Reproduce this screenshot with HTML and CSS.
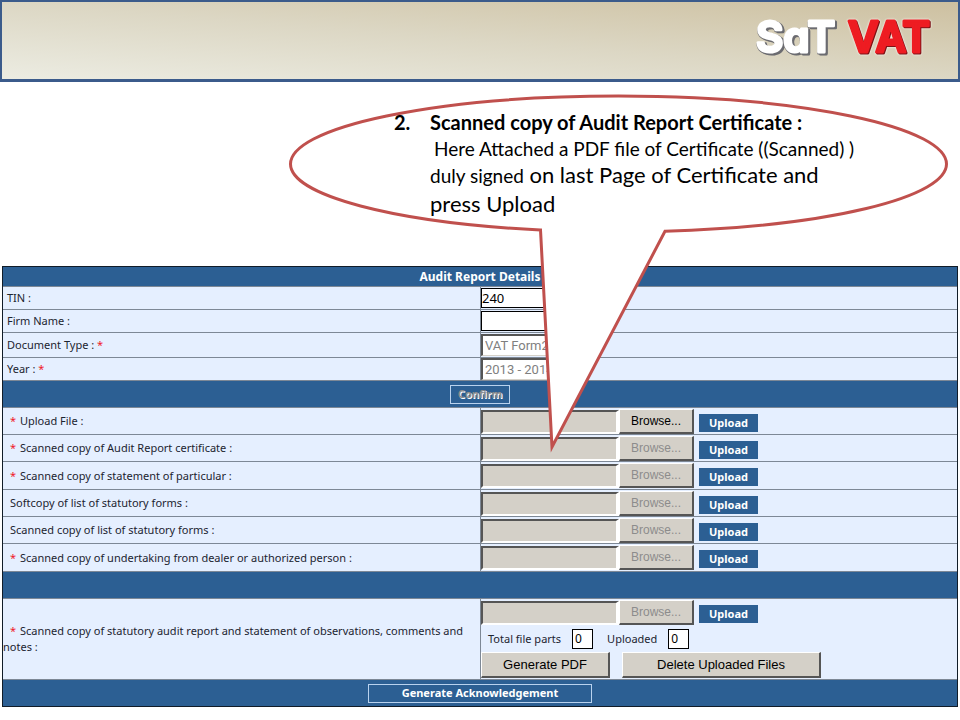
FILE: index.html
```
<!DOCTYPE html>
<html lang="en">
<head>
    <meta charset="UTF-8">
    <meta name="viewport" content="width=device-width, initial-scale=1.0">
    <title>SaT VAT - Audit Report</title>
    <link rel="stylesheet" href="styles.css">
</head>
<body>
    <header class="banner">
        <svg class="logo" width="184" height="48" viewBox="0 0 184 48" role="img" aria-label="SaT VAT">
            <text class="logo-white" x="2" y="38">SaT</text>
            <text class="logo-red" x="94" y="38">VAT</text>
        </svg>
    </header>

    <section class="callout">
        <svg class="bubble" viewBox="0 0 659 358" preserveAspectRatio="none" aria-hidden="true">
            <path d="M251.5 136 A328 68 0 0 1 1.5 70 A328 68 0 0 1 657.5 70 A328 68 0 0 1 376 137.3 L263 353 Z"/>
        </svg>
        <ol class="steps" start="2">
            <li>
                <h2>Scanned copy of Audit Report Certificate :</h2>
                <p class="here">Here Attached a PDF file of Certificate ((Scanned) )</p>
                <p class="big"><small>duly signed</small> on last Page of Certificate and<br>press Upload</p>
            </li>
        </ol>
    </section>

    <form class="report">
        <table class="details">
            <colgroup>
                <col class="col-label">
                <col>
            </colgroup>
            <thead>
                <tr class="title"><th colspan="2">Audit Report Details</th></tr>
            </thead>
            <tbody class="info">
                <tr>
                    <td><label for="tin">TIN :</label></td>
                    <td><input class="box" type="text" id="tin" value="240"></td>
                </tr>
                <tr>
                    <td><label for="firm">Firm Name :</label></td>
                    <td><input class="box" type="text" id="firm"></td>
                </tr>
                <tr class="tall">
                    <td><label for="docType">Document Type : <span class="req">*</span></label></td>
                    <td><select class="pick" id="docType" disabled><option>VAT Form217</option></select></td>
                </tr>
                <tr>
                    <td><label for="year">Year : <span class="req">*</span></label></td>
                    <td><select class="pick" id="year" disabled><option>2013 - 2014</option></select></td>
                </tr>
            </tbody>
            <tbody>
                <tr class="bar"><td colspan="2"><button type="button" class="outline confirm" disabled>Confirm</button></td></tr>
            </tbody>
            <tbody class="files">
                <tr>
                    <td><label for="file1"><span class="req">*</span> Upload File :</label></td>
                    <td>
                        <div class="picker">
                            <input class="path" type="text" id="file1" readonly>
                            <button type="button" class="grey">Browse...</button>
                            <button type="button" class="upload">Upload</button>
                        </div>
                    </td>
                </tr>
                <tr>
                    <td><label for="file2"><span class="req">*</span> Scanned copy of Audit Report certificate :</label></td>
                    <td>
                        <div class="picker">
                            <input class="path" type="text" id="file2" disabled>
                            <button type="button" class="grey" disabled>Browse...</button>
                            <button type="button" class="upload">Upload</button>
                        </div>
                    </td>
                </tr>
                <tr>
                    <td><label for="file3"><span class="req">*</span> Scanned copy of statement of particular :</label></td>
                    <td>
                        <div class="picker">
                            <input class="path" type="text" id="file3" disabled>
                            <button type="button" class="grey" disabled>Browse...</button>
                            <button type="button" class="upload">Upload</button>
                        </div>
                    </td>
                </tr>
                <tr>
                    <td><label for="file4">Softcopy of list of statutory forms :</label></td>
                    <td>
                        <div class="picker">
                            <input class="path" type="text" id="file4" disabled>
                            <button type="button" class="grey" disabled>Browse...</button>
                            <button type="button" class="upload">Upload</button>
                        </div>
                    </td>
                </tr>
                <tr>
                    <td><label for="file5">Scanned copy of list of statutory forms :</label></td>
                    <td>
                        <div class="picker">
                            <input class="path" type="text" id="file5" disabled>
                            <button type="button" class="grey" disabled>Browse...</button>
                            <button type="button" class="upload">Upload</button>
                        </div>
                    </td>
                </tr>
                <tr>
                    <td><label for="file6"><span class="req">*</span> Scanned copy of undertaking from dealer or authorized person :</label></td>
                    <td>
                        <div class="picker">
                            <input class="path" type="text" id="file6" disabled>
                            <button type="button" class="grey" disabled>Browse...</button>
                            <button type="button" class="upload">Upload</button>
                        </div>
                    </td>
                </tr>
            </tbody>
            <tbody>
                <tr class="bar"><td colspan="2"></td></tr>
            </tbody>
            <tbody class="files statutory">
                <tr>
                    <td><label for="file7"><span class="req">*</span> Scanned copy of statutory audit report and statement of observations, comments and notes :</label></td>
                    <td>
                        <div class="picker">
                            <input class="path" type="text" id="file7" disabled>
                            <button type="button" class="grey" disabled>Browse...</button>
                            <button type="button" class="upload">Upload</button>
                        </div>
                        <div class="parts">
                            <label for="total">Total file parts</label>
                            <input class="count" type="text" id="total" value="0">
                            <label for="done">Uploaded</label>
                            <input class="count" type="text" id="done" value="0">
                        </div>
                        <div class="actions">
                            <button type="button" class="grey generate">Generate PDF</button>
                            <button type="button" class="grey delete">Delete Uploaded Files</button>
                        </div>
                    </td>
                </tr>
            </tbody>
            <tfoot>
                <tr class="bar"><td colspan="2"><button type="button" class="outline ack">Generate Acknowledgement</button></td></tr>
            </tfoot>
        </table>
    </form>
</body>
</html>
```
FILE: styles.css
```
*{
    box-sizing: border-box;
}
body{
    margin: 0;
    background-color: #fff;
    color: #1c2430;
    font-family: "Noto Sans", "Liberation Sans", sans-serif;
    font-size: 11px;
    line-height: 16px;
}
button, input, select{
    margin: 0;
    padding: 0;
    border-radius: 0;
}

/* banner */
.banner{
    height: 82px;
    display: flex;
    justify-content: flex-end;
    padding: 12px 20px 0 0;
    border: 2px solid #3b5b8b;
    border-bottom-width: 3px;
    background: linear-gradient(to top right, #ecece2, #dcd7c4 50%, #cdc0a0);
}
.logo{
    overflow: visible;
}
.logo text{
    font-family: "Inter", sans-serif;
    font-weight: 600;
    font-size: 42px;
    font-feature-settings: "cv11";
    stroke-width: 3px;
    stroke-linejoin: round;
}
.logo .logo-white{
    fill: #fff;
    stroke: #fff;
    filter: drop-shadow(2px 1px 0 #6b6b70) drop-shadow(0 1px 0 #6b6b70);
}
.logo .logo-red{
    fill: #ee1c22;
    stroke: #ee1c22;
    filter: drop-shadow(1px 1px 0 #7c1215) drop-shadow(0 0 1px #fff);
}

/* callout */
.callout{
    position: relative;
    height: 172px;
    margin: 12px 12px 0 289px;
}
.bubble{
    position: absolute;
    top: 0;
    left: 0;
    z-index: 1;
    width: 100%;
    height: 358px;
    overflow: visible;
    pointer-events: none;
}
.bubble path{
    fill: #fff;
    stroke: #c0504d;
    stroke-width: 3px;
}
.steps{
    position: relative;
    z-index: 2;
    margin: 0;
    padding: 15px 0 0 141px;
    color: #000;
    font-family: "Lato", sans-serif;
    font-size: 19px;
    list-style: none;
    counter-reset: step 1;
}
.steps li{
    counter-increment: step;
}
.steps h2{
    display: flex;
    margin: 0 0 0 -36px;
    font-size: 20px;
    line-height: 27px;
}
.steps h2::before{
    content: counter(step) ".";
    width: 36px;
}
.steps p{
    margin: 0;
}
.here{
    padding-left: 4px;
    line-height: 25px;
}
.big{
    font-size: 22px;
    line-height: 28px;
}
.big small{
    font-size: 19px;
}

/* report table */
.report{
    padding: 0 2px;
}
.details{
    width: 100%;
    table-layout: fixed;
    border: 1px solid #111c28;
    border-spacing: 0;
    background-color: #e5efff;
}
.col-label{
    width: 50%;
}
.details td, .details th{
    padding: 0;
}
.details td{
    height: 23px;
    border-top: 1px solid #7d8896;
}
.title th{
    height: 19px;
    background-color: #2c5f93;
    color: #fff;
    font-size: 12px;
    line-height: 18px;
}
.req{
    color: #f01828;
}
.info td:first-child{
    padding-left: 4px;
}
.info .tall td{
    height: 25px;
}
.info td:last-child,
.files td:last-child{
    border-left: 1px solid #7d8896;
}
.box{
    display: block;
    width: 110px;
    height: 20px;
    border: 1px solid #000;
    background-color: #fff;
    font-family: "Noto Sans", sans-serif;
    font-size: 13px;
}
.pick{
    display: block;
    width: 90px;
    height: 22px;
    padding: 0 2px;
    appearance: none;
    border: 1px solid #d5d1c9;
    border-top: 2px solid #555;
    border-left: 2px solid #555;
    background-color: #fff;
    color: #7f7f7f;
    opacity: 1;
    font-family: "Roboto", sans-serif;
    font-size: 13px;
}
.details .bar td{
    height: 27px;
    background-color: #2c5f93;
    text-align: center;
}
.outline{
    display: block;
    height: 19px;
    margin: 0 auto;
    border: 1px solid #b9d2ee;
    background-color: #2c5f93;
    color: #fff;
    font-family: "Noto Sans", sans-serif;
    font-size: 11px;
    font-weight: 700;
    line-height: 16px;
}
.confirm{
    width: 60px;
    color: #8d8d8d;
    text-shadow: 1px 1px 0 #fff;
}
.ack{
    width: 224px;
}

/* file rows */
.files td{
    height: 27px;
}
.files tr:nth-child(3n) td{
    height: 28px;
}
.files td:first-child{
    text-indent: 7px;
}
.files .req{
    margin-right: 1px;
}
.picker{
    display: flex;
    align-items: flex-end;
}
.path{
    width: 138px;
    height: 24px;
    border: 2px solid #555;
    border-right: 3px solid #fff;
    border-bottom-color: #fff;
    background-color: #d4d0c8;
}
.grey{
    width: 75px;
    height: 25px;
    border: 2px solid #555;
    border-top: 1px solid #fff;
    border-left: 1px solid #fff;
    background-color: #d4d0c8;
    color: #000;
    font-family: "Liberation Sans", Arial, sans-serif;
    font-size: 12px;
}
.grey:disabled{
    color: #8c8c8c;
}
.upload{
    width: 59px;
    height: 18px;
    margin: 0 0 2px 5px;
    border: 0;
    background-color: #2c5f93;
    color: #fff;
    font-family: "Noto Sans", sans-serif;
    font-size: 11px;
    font-weight: 700;
    line-height: 18px;
}
.details .statutory td{
    height: 81px;
}
.parts{
    display: flex;
    align-items: center;
    gap: 11px;
    height: 27px;
    padding-left: 7px;
}
.count{
    width: 21px;
    height: 20px;
    margin-right: 3px;
    padding-left: 2px;
    border: 1px solid #000;
    background-color: #fff;
    font-family: "Noto Sans", sans-serif;
    font-size: 12px;
}
.actions{
    display: flex;
    gap: 12px;
}
.generate{
    width: 129px;
    height: 26px;
    font-size: 13px;
}
.delete{
    width: 199px;
    height: 26px;
    font-size: 13px;
}
```
